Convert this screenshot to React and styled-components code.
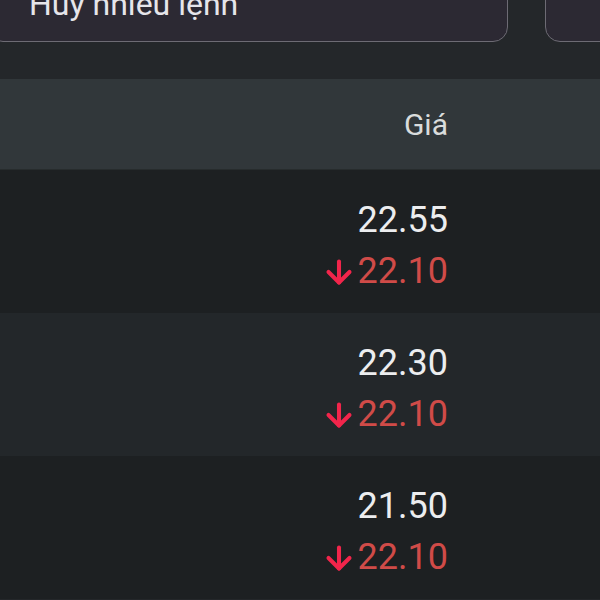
import React from "react";
import styled, { createGlobalStyle } from "styled-components";
import { ArrowDown } from "lucide-react";

const rows = [
  { price: "22.55", match: "22.10" },
  { price: "22.30", match: "22.10" },
  { price: "21.50", match: "22.10" },
];

const App = () => {
  return (
    <Page>
      <GlobalStyle />
      <Toolbar>
        <ActionButton>Hủy nhiều lệnh</ActionButton>
        <ActionButton />
      </Toolbar>

      <Table>
        <HeaderRow>
          <span />
          <HeaderCell>Giá</HeaderCell>
          <span />
        </HeaderRow>
        {rows.map((row, index) => (
          <Row key={index} alt={index % 2 === 1}>
            <span />
            <PriceCell>
              <Price>{row.price}</Price>
              <MatchPrice>
                <ArrowDown size={36} strokeWidth={2.7} color="#f2254b" />
                {row.match}
              </MatchPrice>
            </PriceCell>
            <span />
          </Row>
        ))}
      </Table>
    </Page>
  );
};

export default App;

const GlobalStyle = createGlobalStyle`
  html, body {
    margin: 0;
    padding: 0;
    background: #24272a;
    overflow: hidden;
  }
  body {
    font-family: Roboto, "Noto Sans", sans-serif;
  }
`;

const Page = styled.div`
  width: 600px;
  height: 600px;
  overflow: hidden;
  background: #24272a;
`;

const Toolbar = styled.div`
  display: grid;
  grid-template-columns: 520px 120px;
  gap: 37px;
  margin: -34px 0 0 -12px;
  padding-bottom: 37px;
`;

const ActionButton = styled.div`
  height: 76px;
  box-sizing: border-box;
  display: flex;
  align-items: center;
  padding-left: 40px;
  background: #2c2933;
  border: 1.5px solid #6d6b74;
  border-radius: 15px;
  color: #e6e5ea;
  font-size: 32px;
  white-space: nowrap;
  overflow: hidden;
`;

const Table = styled.div`
  display: flex;
  flex-direction: column;
`;

const HeaderRow = styled.div`
  display: grid;
  grid-template-columns: 1fr auto 152px;
  align-items: center;
  height: 91px;
  background: #31373a;
  border-bottom: 1px solid #272c2d;
  box-sizing: border-box;
`;

const HeaderCell = styled.div`
  color: #d9dcdc;
  font-size: 30px;
`;

const Row = styled.div`
  display: grid;
  grid-template-columns: 1fr auto 152px;
  height: 143px;
  box-sizing: border-box;
  padding: 25px 0 16px;
  background: ${(props) => (props.alt ? "#23272a" : "#1d2022")};
`;

const PriceCell = styled.div`
  display: flex;
  flex-direction: column;
  align-items: flex-end;
  font-size: 36px;
  line-height: 51px;
`;

const Price = styled.div`
  color: #ecedef;
`;

const MatchPrice = styled.div`
  display: flex;
  align-items: center;
  gap: 1px;
  color: #d04b48;
`;
